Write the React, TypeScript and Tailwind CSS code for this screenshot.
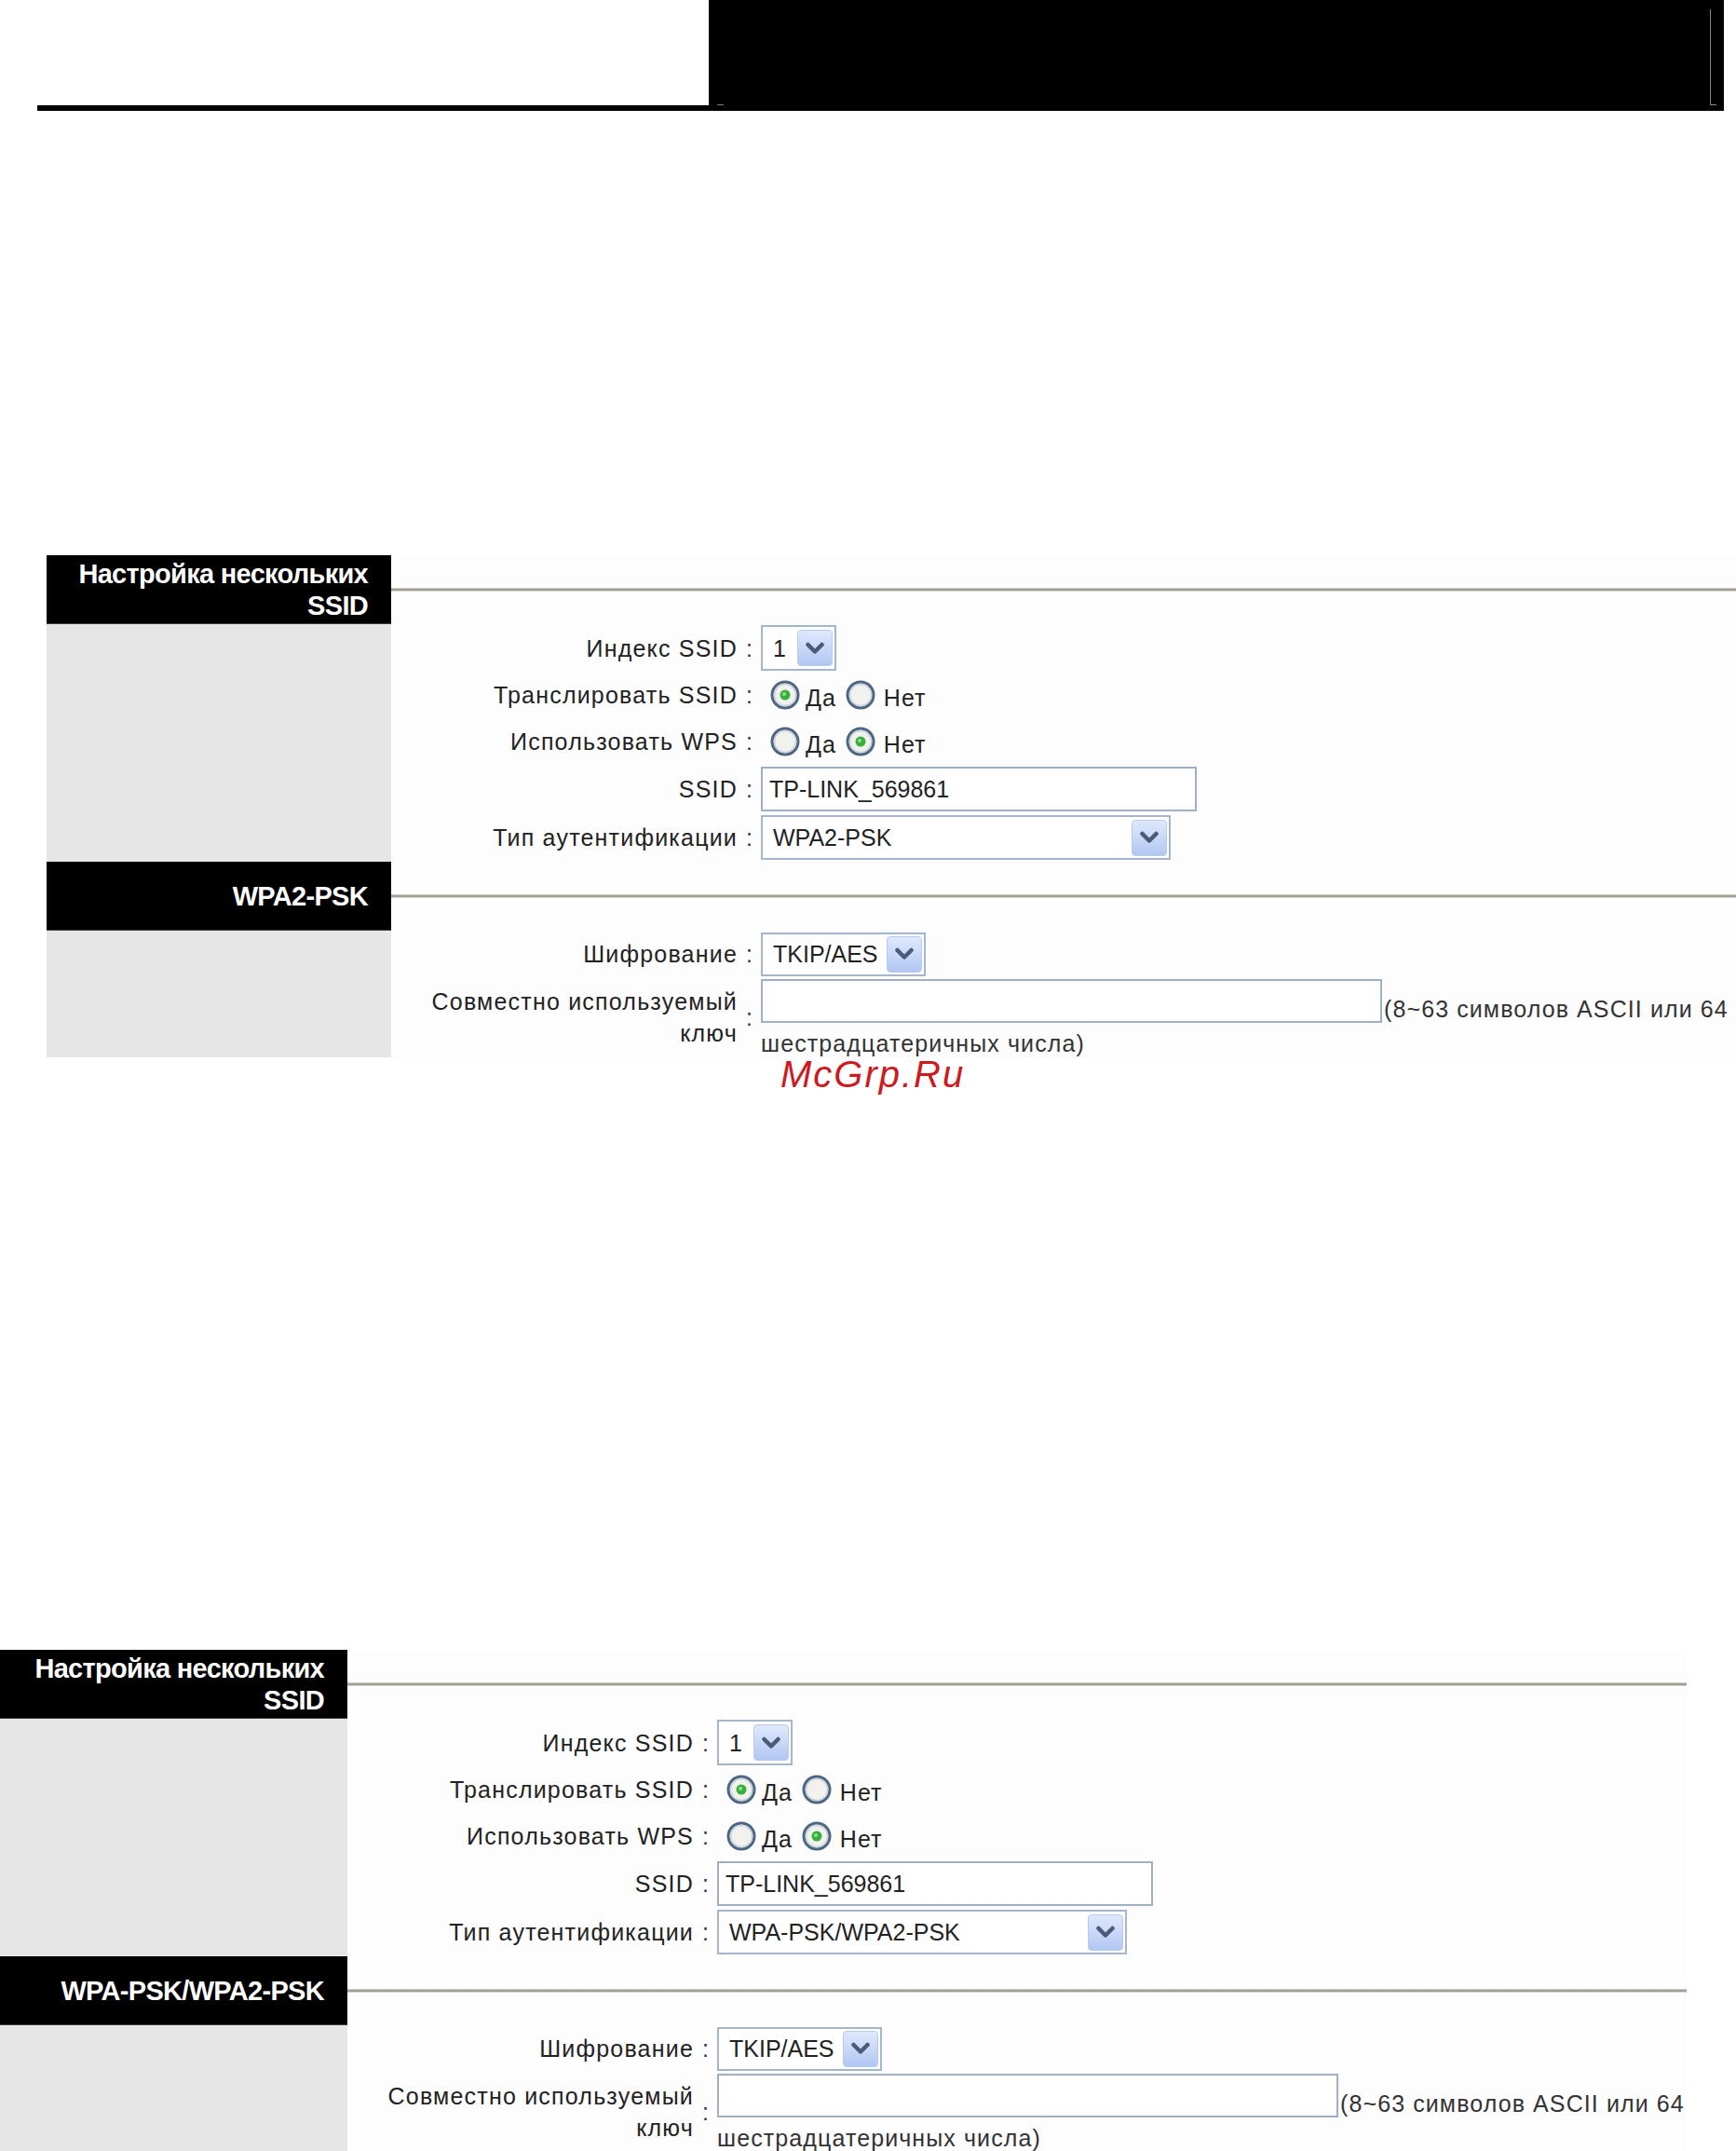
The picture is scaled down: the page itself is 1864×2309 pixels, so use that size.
import React from "react";

function Chevron() {
  return (
    <svg width="22" height="14" viewBox="0 0 22 14">
      <path d="M3.5 3 L11 10.5 L18.5 3" fill="none" stroke="#4b5a77" strokeWidth="4.5" strokeLinecap="round" strokeLinejoin="round" />
    </svg>
  );
}

function Radio({ checked }: { checked?: boolean }) {
  return (
    <svg width="32" height="32" viewBox="0 0 32 32" className="shrink-0">
      <circle cx="16" cy="16" r="14" fill="#f1f1ed" stroke="#4d6682" strokeWidth="3" />
      <circle cx="16" cy="16" r="11.5" fill="none" stroke="#c9d2dc" strokeWidth="1.5" />
      {checked && <circle cx="16" cy="16" r="5.5" fill="#36b03a" />}
      {checked && <circle cx="15" cy="15" r="2" fill="#8fe08f" />}
    </svg>
  );
}

function Select({ value, cls }: { value: string; cls: string }) {
  return (
    <div className={"flex items-center border-2 border-[#a4b6cc] bg-white pl-[11px] pr-[2px] " + cls}>
      <span className="flex-1 text-[25px] leading-[30px] text-[#222] whitespace-nowrap">{value}</span>
      <div className="w-[38px] h-[39px] rounded-[4px] border border-[#b8caee] bg-linear-to-b from-[#dfe9fc] to-[#b1c7f2] flex items-center justify-center">
        <Chevron />
      </div>
    </div>
  );
}

function Input({ value, cls }: { value?: string; cls: string }) {
  return (
    <div className={"flex items-center border-2 border-[#9db0c7] bg-white pl-[7px] " + cls}>
      <span className="text-[25px] leading-[30px] text-[#222] whitespace-nowrap">{value}</span>
    </div>
  );
}

function Row({ label, h, children, label2 }: { label: string; label2?: string; h: string; children: React.ReactNode }) {
  return (
    <div className={"grid grid-cols-[372px_25px_1fr] items-center " + h}>
      <div className="text-right text-[25px] leading-[34px] tracking-[1.2px] text-[#222]">
        {label}
        {label2 && <br />}
        {label2}
      </div>
      <div className="text-center text-[25px] leading-[30px] text-[#333]">:</div>
      <div className="flex items-center">{children}</div>
    </div>
  );
}

function RadioPair({ yes }: { yes: boolean }) {
  return (
    <div className="flex items-center pl-[10px] text-[25px] leading-[30px] tracking-[1px] text-[#222]">
      <Radio checked={yes} />
      <span className="ml-[6px] mt-[6px]">Да</span>
      <span className="ml-[10px]"><Radio checked={!yes} /></span>
      <span className="ml-[9px] mt-[6px]">Нет</span>
    </div>
  );
}

function Header({ lines }: { lines: string[] }) {
  return (
    <div className="h-[74px] bg-black flex flex-col justify-center items-end pr-[25px] text-white font-bold text-[29px] leading-[34px] tracking-[-0.7px] border-b border-[#3a3a3a]">
      {lines.map((l) => (
        <span key={l}>{l}</span>
      ))}
    </div>
  );
}

function LineCell() {
  return (
    <div className="flex items-center bg-[#fdfdfd]">
      <div className="w-full border-t border-[#cbc9c1] border-b border-b-[#d6d4cd] h-[4px] bg-[#a29f93]" />
    </div>
  );
}

function Section({
  grid,
  wrap,
  auth,
  watermark,
}: {
  grid: string;
  wrap: string;
  auth: string;
  watermark?: boolean;
}) {
  return (
    <div className={"relative " + wrap}>
      <div className={"grid " + grid}>
        <Header lines={["Настройка нескольких", "SSID"]} />
        <LineCell />
        <div className="bg-[#e6e6e6]" />
        <div className="bg-[#fdfdfd]">
          <Row label="Индекс SSID" h="h-[51px]">
            <Select value="1" cls="w-[81px] h-[49px]" />
          </Row>
          <Row label="Транслировать SSID" h="h-[50px]">
            <RadioPair yes={true} />
          </Row>
          <Row label="Использовать WPS" h="h-[50px]">
            <RadioPair yes={false} />
          </Row>
          <Row label="SSID" h="h-[52px]">
            <Input value="TP-LINK_569861" cls="w-[468px] h-[48px]" />
          </Row>
          <Row label="Тип аутентификации" h="h-[52px]">
            <Select value={auth} cls="w-[440px] h-[48px]" />
          </Row>
        </div>
        <Header lines={[auth]} />
        <LineCell />
        <div className="bg-[#e6e6e6]" />
        <div className="bg-[#fdfdfd]">
          <Row label="Шифрование" h="h-[50px]">
            <Select value="TKIP/AES" cls="w-[177px] h-[47px]" />
          </Row>
          <Row label="Совместно используемый" label2="ключ" h="h-[86px]">
            <div className="flex flex-col self-start pt-[2px] text-[25px] leading-[30px] tracking-[1.1px] text-[#333]">
              <div className="flex items-end">
                <Input cls="w-[667px] h-[47px]" />
                <span className="whitespace-nowrap ml-[2px]">(8~63 символов ASCII или 64</span>
              </div>
              <div className="mt-[7px] whitespace-nowrap">шестрадцатеричных числа)</div>
            </div>
          </Row>
        </div>
      </div>
      {watermark && (
        <div className="absolute left-[788px] top-[537px] text-[40px] leading-none italic tracking-[2px] text-[#cc1a1f]">
          McGrp.Ru
        </div>
      )}
    </div>
  );
}

export default function App() {
  return (
    <div className="w-[1864px] h-[2309px] overflow-hidden bg-white font-['Liberation_Sans',Arial,sans-serif]">
      <div className="flex items-end h-[119px] pl-[40px]">
        <div className="w-[721px] h-[6px] bg-black" />
        <div className="relative w-[1090px] h-[119px] bg-black">
          <div className="absolute left-[9px] top-[112px] w-[7px] h-[1px] bg-[#7a7a7a]" />
          <div className="absolute left-[1075px] top-[10px] w-[1px] h-[102px] bg-[#8a8a8a]" />
          <div className="absolute left-[1075px] top-[112px] w-[7px] h-[1px] bg-[#8a8a8a]" />
        </div>
      </div>
      <div className="mt-[477px]">
        <Section grid="grid-cols-[370px_1fr]" wrap="ml-[50px] w-[1814px]" auth="WPA2-PSK" watermark />
      </div>
      <div className="mt-[636px]">
        <Section grid="grid-cols-[373px_1fr]" wrap="w-[1811px]" auth="WPA-PSK/WPA2-PSK" />
      </div>
    </div>
  );
}
